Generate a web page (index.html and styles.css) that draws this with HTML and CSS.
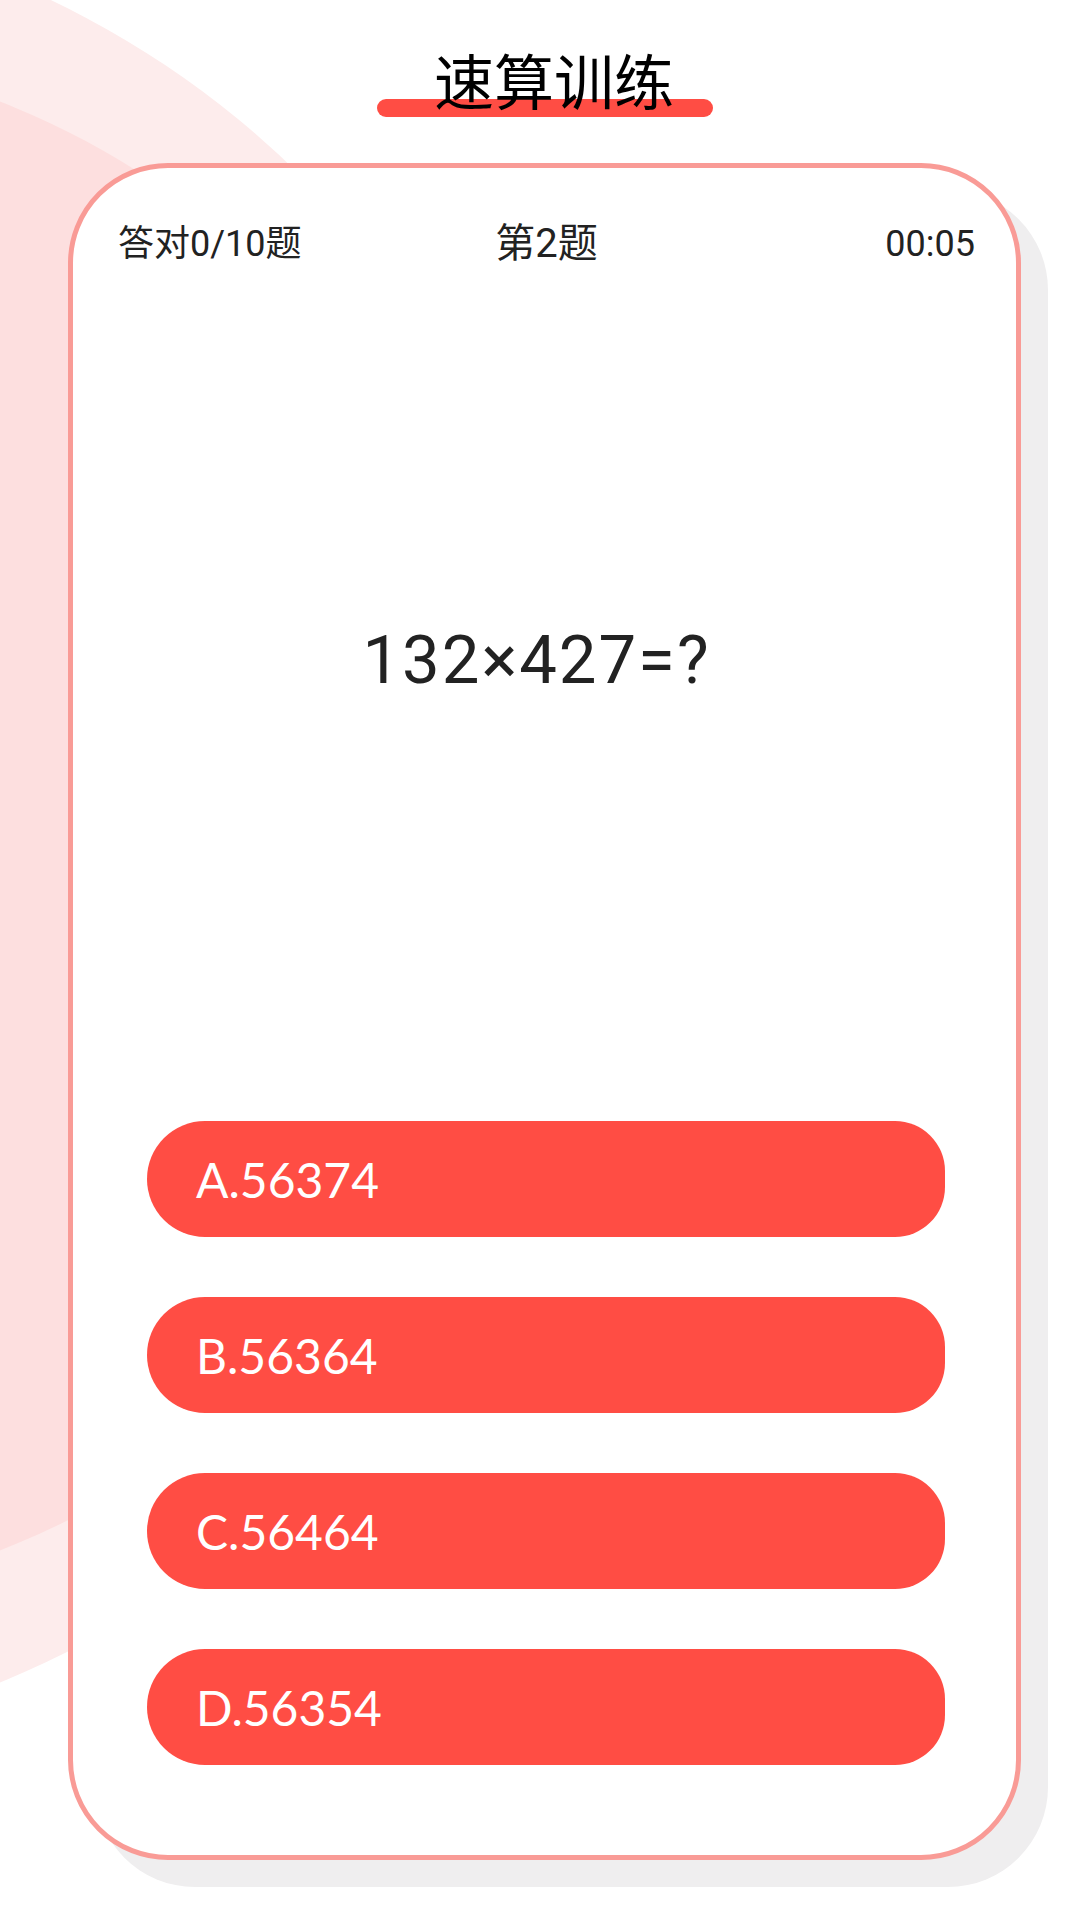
FILE: index.html
```html
<!DOCTYPE html>
<html lang="zh">
<head>
<meta charset="utf-8">
<title>速算训练</title>
<link rel="stylesheet" href="styles.css">
</head>
<body>
<div class="bg-circle bg-outer"></div>
<div class="bg-circle bg-inner"></div>
<main class="page">
  <header class="title-wrap">
    <h1 class="title">速算训练</h1>
  </header>
  <section class="card">
    <div class="stats">
      <span class="stat stat-left">答对0/10题</span>
      <span class="stat stat-mid">第2题</span>
      <span class="stat stat-right">00:05</span>
    </div>
    <div class="question">132×427=?</div>
    <ul class="options">
      <li class="option">A.56374</li>
      <li class="option">B.56364</li>
      <li class="option">C.56464</li>
      <li class="option">D.56354</li>
    </ul>
  </section>
</main>
</body>
</html>
```
FILE: styles.css
```css
html, body {
  margin: 0;
  padding: 0;
}
body {
  width: 1080px;
  height: 1920px;
  overflow: hidden;
  position: relative;
  background: #ffffff;
  font-family: Roboto, "Noto Sans CJK SC", sans-serif;
  color: #1f1f1f;
}
.bg-circle {
  position: absolute;
  border-radius: 50%;
}
.bg-outer {
  left: -1266px;
  top: -90px;
  width: 1840px;
  height: 1840px;
  background: #fdecec;
}
.bg-inner {
  left: -1058px;
  top: 49px;
  width: 1554px;
  height: 1554px;
  background: #fddfdf;
}
.page {
  position: relative;
  z-index: 1;
  padding-top: 49px;
}
.title-wrap {
  display: flex;
  justify-content: center;
  padding-left: 28px;
}
.title {
  position: relative;
  z-index: 0;
  margin: 0;
  font-family: "Noto Sans CJK SC", sans-serif;
  font-weight: 400;
  font-size: 60px;
  line-height: 60px;
  color: #000;
}
.title::before {
  content: "";
  position: absolute;
  left: -57px;
  right: -39px;
  top: 50px;
  height: 18px;
  border-radius: 9px;
  background: #ff4d44;
  z-index: -1;
}
.card {
  box-sizing: border-box;
  margin: 54px 0 0 68px;
  width: 953px;
  height: 1697px;
  border: 5px solid #f99b96;
  border-radius: 100px;
  background: #ffffff;
  box-shadow: 27px 27px 0 #efeeef;
  display: flex;
  flex-direction: column;
}
.stats {
  display: grid;
  grid-template-columns: 1fr auto 1fr;
  align-items: center;
  margin-top: 46px;
  padding: 0 41px 0 45px;
  height: 60px;
  line-height: 60px;
  font-size: 36px;
  color: #222;
}
.stat-left { justify-self: start; }
.stat-mid { justify-self: center; font-size: 40px; }
.stat-right { justify-self: end; }
.question {
  margin-top: 346px;
  padding-right: 16px;
  height: 80px;
  line-height: 80px;
  text-align: center;
  font-size: 67px;
  letter-spacing: 2px;
  color: #222;
}
.options {
  list-style: none;
  margin: 421px 0 0 0;
  padding: 0 71px 0 74px;
  display: flex;
  flex-direction: column;
  gap: 60px;
}
.option {
  box-sizing: border-box;
  height: 116px;
  display: flex;
  align-items: center;
  padding-left: 49px;
  border-radius: 58px 50px 50px 58px;
  background: #ff4d44;
  color: #ffffff;
  font-family: Lato, Roboto, sans-serif;
  font-size: 48px;
}
```
